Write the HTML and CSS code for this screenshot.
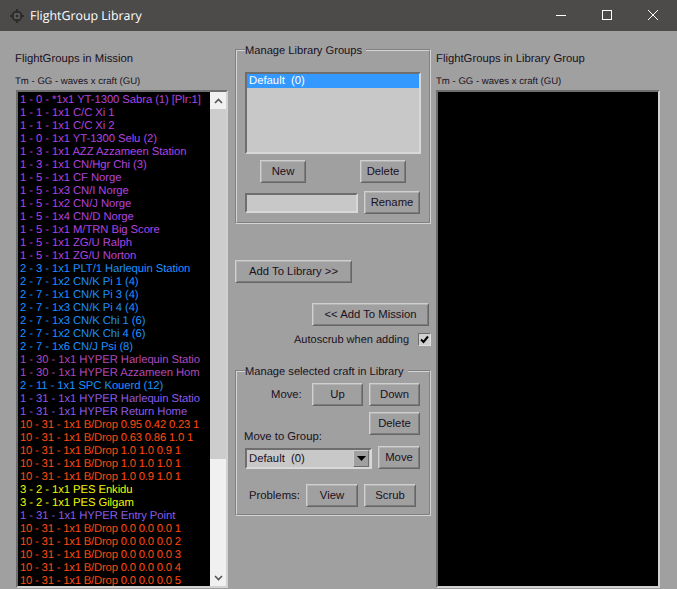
FILE: index.html
```html
<!DOCTYPE html>
<html lang="en">
<head>
<meta charset="utf-8">
<title>FlightGroup Library</title>
<link rel="stylesheet" href="styles.css">
</head>
<body>
<div class="window">
  <header class="titlebar">
    <svg class="appicon" width="16" height="16" viewBox="0 0 16 16"><circle cx="8" cy="8" r="4.500" fill="#585856" stroke="#2c2c2c" stroke-width="2"/><path d="M8 1v4M8 11v4M1 8h4M11 8h4" stroke="#2c2c2c" stroke-width="2"/><circle cx="8" cy="8" r="1.200" fill="#2c2c2c"/></svg>
    <span class="title">FlightGroup Library</span>
    <div class="winbtns">
      <svg width="46" height="31" viewBox="0 0 46 31"><path d="M18 15.500h10" stroke="#fff"/></svg>
      <svg width="46" height="31" viewBox="0 0 46 31"><rect x="18.500" y="10.500" width="9" height="9" fill="none" stroke="#fff"/></svg>
      <svg width="46" height="31" viewBox="0 0 46 31"><path d="M18 10l10 10M28 10l-10 10" stroke="#fff"/></svg>
    </div>
  </header>
  <main class="content">
    <section class="col-left">
      <div class="heading">FlightGroups in Mission</div>
      <div class="sub">Tm - GG - waves x craft (GU)</div>
      <div class="listbox">
        <ul class="fg">
          <li class="t1">1 - 0 - *1x1 YT-1300 Sabra (1) [Plr:1]</li>
          <li class="t1">1 - 1 - 1x1 C/C Xi 1</li>
          <li class="t1">1 - 1 - 1x1 C/C Xi 2</li>
          <li class="t1">1 - 0 - 1x1 YT-1300 Selu (2)</li>
          <li class="t1">1 - 3 - 1x1 AZZ Azzameen Station</li>
          <li class="t1">1 - 3 - 1x1 CN/Hgr Chi (3)</li>
          <li class="t1">1 - 5 - 1x1 CF Norge</li>
          <li class="t1">1 - 5 - 1x3 CN/I Norge</li>
          <li class="t1">1 - 5 - 1x2 CN/J Norge</li>
          <li class="t1">1 - 5 - 1x4 CN/D Norge</li>
          <li class="t1">1 - 5 - 1x1 M/TRN Big Score</li>
          <li class="t1">1 - 5 - 1x1 ZG/U Ralph</li>
          <li class="t1">1 - 5 - 1x1 ZG/U Norton</li>
          <li class="t2">2 - 3 - 1x1 PLT/1 Harlequin Station</li>
          <li class="t2">2 - 7 - 1x2 CN/K Pi 1 (4)</li>
          <li class="t2">2 - 7 - 1x1 CN/K Pi 3 (4)</li>
          <li class="t2">2 - 7 - 1x3 CN/K Pi 4 (4)</li>
          <li class="t2">2 - 7 - 1x3 CN/K Chi 1 (6)</li>
          <li class="t2">2 - 7 - 1x2 CN/K Chi 4 (6)</li>
          <li class="t2">2 - 7 - 1x6 CN/J Psi (8)</li>
          <li class="t1c">1 - 30 - 1x1 HYPER Harlequin Statio</li>
          <li class="t1c">1 - 30 - 1x1 HYPER Azzameen Hom</li>
          <li class="t2">2 - 11 - 1x1 SPC Kouerd (12)</li>
          <li class="t1b">1 - 31 - 1x1 HYPER Harlequin Statio</li>
          <li class="t1b">1 - 31 - 1x1 HYPER Return Home</li>
          <li class="t10">10 - 31 - 1x1 B/Drop 0.95 0.42 0.23 1</li>
          <li class="t10">10 - 31 - 1x1 B/Drop 0.63 0.86 1.0 1</li>
          <li class="t10">10 - 31 - 1x1 B/Drop 1.0 1.0 0.9 1</li>
          <li class="t10">10 - 31 - 1x1 B/Drop 1.0 1.0 1.0 1</li>
          <li class="t10">10 - 31 - 1x1 B/Drop 1.0 0.9 1.0 1</li>
          <li class="t3">3 - 2 - 1x1 PES Enkidu</li>
          <li class="t3">3 - 2 - 1x1 PES Gilgam</li>
          <li class="t1b">1 - 31 - 1x1 HYPER Entry Point</li>
          <li class="t10">10 - 31 - 1x1 B/Drop 0.0 0.0 0.0 1</li>
          <li class="t10">10 - 31 - 1x1 B/Drop 0.0 0.0 0.0 2</li>
          <li class="t10">10 - 31 - 1x1 B/Drop 0.0 0.0 0.0 3</li>
          <li class="t10">10 - 31 - 1x1 B/Drop 0.0 0.0 0.0 4</li>
          <li class="t10">10 - 31 - 1x1 B/Drop 0.0 0.0 0.0 5</li>
        </ul>
        <div class="scrollbar">
          <div class="arrow"><svg width="9" height="6" viewBox="0 0 9 6"><path d="M1 5l3.500-3.500L8 5" fill="none" stroke="#555" stroke-width="1.600"/></svg></div>
          <div class="track"><div class="thumb"></div></div>
          <div class="arrow"><svg width="9" height="6" viewBox="0 0 9 6"><path d="M1 1l3.500 3.500L8 1" fill="none" stroke="#555" stroke-width="1.600"/></svg></div>
        </div>
      </div>
    </section>

    <section class="col-mid">
      <fieldset class="group group-lib">
        <legend>Manage Library Groups</legend>
        <div class="groups-list"><div class="selected">Default&nbsp; (0)</div></div>
        <div class="row row-newdel">
          <button class="btn btn-46">New</button>
          <button class="btn btn-46">Delete</button>
        </div>
        <div class="row row-rename">
          <div class="textbox"></div>
          <button class="btn btn-56">Rename</button>
        </div>
      </fieldset>

      <button class="btn btn-add-lib">Add To Library &gt;&gt;</button>
      <button class="btn btn-add-mis">&lt;&lt; Add To Mission</button>
      <div class="autoscrub">
        <span>Autoscrub when adding</span>
        <span class="check"><svg width="9" height="9" viewBox="0 0 9 9"><path d="M1 4.500l2.500 2.500L8 1.500" fill="none" stroke="#000" stroke-width="2"/></svg></span>
      </div>

      <fieldset class="group group-craft">
        <legend>Manage selected craft in Library</legend>
        <div class="row row-move">
          <span class="lbl-move">Move:</span>
          <button class="btn btn-51">Up</button>
          <button class="btn btn-51">Down</button>
        </div>
        <div class="row row-delete"><button class="btn btn-51">Delete</button></div>
        <div class="lbl-group">Move to Group:</div>
        <div class="row row-combo">
          <div class="combo"><span class="combo-text">Default&nbsp; (0)</span><span class="combo-btn"><svg width="9" height="5" viewBox="0 0 9 5"><path d="M0 0h9L4.500 5z" fill="#000"/></svg></span></div>
          <button class="btn btn-42">Move</button>
        </div>
        <div class="row row-problems">
          <span class="lbl-prob">Problems:</span>
          <button class="btn btn-52">View</button>
          <button class="btn btn-52">Scrub</button>
        </div>
      </fieldset>
    </section>

    <section class="col-right">
      <div class="heading">FlightGroups in Library Group</div>
      <div class="sub">Tm - GG - waves x craft (GU)</div>
      <div class="listbox listbox-empty"></div>
    </section>
  </main>
</div>
</body>
</html>
```

FILE: styles.css
```css
* { box-sizing: border-box; }
html, body { margin: 0; padding: 0; height: 100%; overflow: hidden; }
body { font-family: "Liberation Sans", Arial, sans-serif; font-size: 11.300px; color: #1a1020; background: #a0a0a0; text-rendering: geometricPrecision; }
.window { width: 677px; height: 589px; display: flex; flex-direction: column; background: #a0a0a0; }

.titlebar { height: 31px; flex: none; display: flex; align-items: center; background: #4c4b49; color: #fff; padding-left: 9px; }
.appicon { flex: none; }
.title { margin-left: 5px; font-size: 12.400px; font-family: "Open Sans", "Liberation Sans", sans-serif; }
.winbtns { margin-left: auto; display: flex; margin-right: 1px; }
.winbtns svg { display: block; }

.content { flex: 1; min-height: 0; display: flex; padding-left: 15px; }
.col-left { width: 213px; flex: none; display: flex; flex-direction: column; }
.col-mid { width: 196px; flex: none; margin-left: 7px; display: flex; flex-direction: column; padding-top: 11px; }
.col-right { width: 230px; flex: none; margin-left: 5px; display: flex; flex-direction: column; }

.heading { margin-top: 21px; height: 14px; line-height: 14px; }
.sub { margin-top: 9px; height: 13px; line-height: 13px; font-size: 9.600px; }
.listbox { margin-top: 2px; height: 498px; flex: none; display: flex; background: #000; border: 2px solid; border-color: #6e6e6e #d2d2d2 #d2d2d2 #6e6e6e; }
.col-left .listbox { width: 212px; margin-left: 1px; }
.col-right .listbox { width: 224px; }

.fg { list-style: none; margin: 0; padding: 2px 0 0 2px; flex: 1; min-width: 0; overflow: hidden; background: #000; letter-spacing: -0.080px; }
.fg li { height: 13px; line-height: 13px; white-space: nowrap; }
.t1 { color: #b044e0; }
.t1b { color: #8c5ae8; }
.t1c { color: #b048b8; }
.t2 { color: #1e90ff; }
.t3 { color: #f0f800; }
.fg .t10 { color: #ff4a10; letter-spacing: -0.200px; }

.scrollbar { width: 16px; flex: none; display: flex; flex-direction: column; background: #f0f0f0; }
.arrow { height: 17px; flex: none; display: flex; align-items: center; justify-content: center; }
.track { flex: 1; }
.thumb { height: 350px; background: #cdcdcd; }

.group { margin: 0; padding: 0 8px; min-width: 0; border: 2px groove #d4d4d4; display: block; }
.group legend { padding: 3px 4px 0 0; margin-left: 0; line-height: 13px; font-size: 11.150px; }
.group-lib { height: 182px; flex: none; }
.group-craft { height: 153px; flex: none; margin-top: 17px; }

.row { display: flex; }
.btn { font: inherit; color: inherit; padding: 0 0 2px; background: #a0a0a0; border: 1px solid; border-color: #d0d0d0 #666 #666 #d0d0d0; box-shadow: inset 1px 1px 0 #b4b4b4, inset -1px -1px 0 #7c7c7c; display: block; flex: none; height: 23px; }
.btn-46 { width: 46px; }
.btn-56 { width: 56px; }
.btn-51 { width: 51px; }
.btn-42 { width: 42px; }
.btn-52 { width: 52px; }

.groups-list { margin-top: 14px; width: 176px; height: 82px; background: #c8c8c8; border: 2px solid; border-color: #6e6e6e #d8d8d8 #d8d8d8 #6e6e6e; }
.selected { background: #3399ff; color: #fff; height: 14px; line-height: 13px; padding: 1px 0 0 2px; }
.row-newdel { margin-top: 6px; padding-left: 15px; gap: 54px; }
.row-rename { margin-top: 8px; gap: 6px; }
.textbox { width: 113px; height: 20px; margin-top: 2px; background: #c8c8c8; border: 2px solid; border-color: #6e6e6e #d8d8d8 #d8d8d8 #6e6e6e; }

.btn-add-lib { width: 117px; margin-top: 36px; }
.btn-add-mis { width: 117px; margin-top: 20px; margin-left: 77px; }
.autoscrub { display: flex; justify-content: flex-end; align-items: center; margin-top: 7px; height: 13px; gap: 9px; font-size: 11px; flex: none; }
.check { width: 13px; height: 13px; background: #d0d0d0; border: 1px solid; border-color: #6e6e6e #e0e0e0 #e0e0e0 #6e6e6e; display: flex; align-items: center; justify-content: center; }

.row-move { margin-top: 4px; margin-left: 26px; align-items: center; gap: 0; }
.lbl-move { width: 41px; }
.row-move .btn + .btn { margin-left: 6px; }
.row-delete { justify-content: flex-end; margin-top: 6px; margin-right: 1px; }
.lbl-group { margin-top: -5px; margin-left: -1px; line-height: 14px; }
.row-combo { margin-top: 2px; align-items: flex-end; gap: 6px; }
.combo { width: 127px; height: 21px; background: #c8c8c8; border: 2px solid; border-color: #6e6e6e #d8d8d8 #d8d8d8 #6e6e6e; display: flex; align-items: center; justify-content: space-between; padding-left: 2px; padding-right: 1px; }
.combo-text { padding-top: 1px; }
.combo-btn { width: 16px; height: 17px; background: #a0a0a0; border: 1px solid; border-color: #cfcfcf #6e6e6e #6e6e6e #cfcfcf; display: flex; align-items: center; justify-content: center; }
.row-problems { margin-top: 15px; margin-left: 4px; align-items: center; }
.lbl-prob { width: 57px; padding-top: 1px; }
.row-problems .btn + .btn { margin-left: 6px; }
```
